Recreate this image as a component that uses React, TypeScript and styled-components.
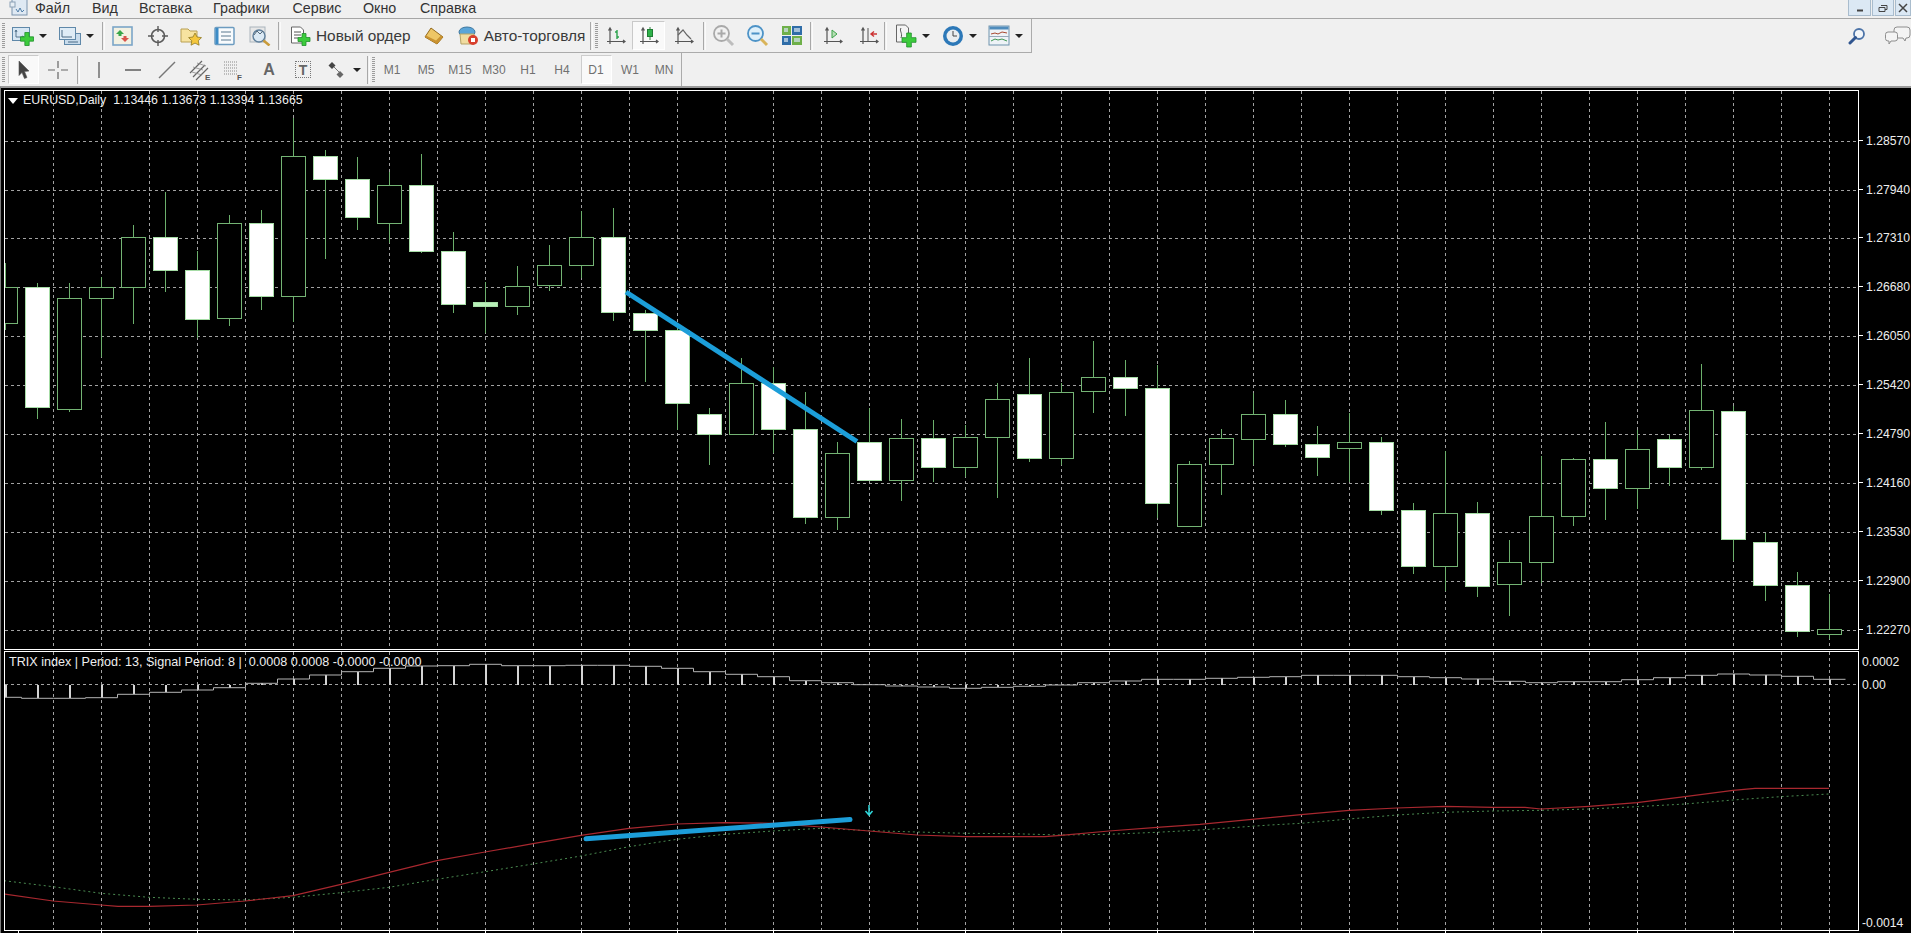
import { FunctionComponent, ReactNode } from 'react';
import styled, { createGlobalStyle } from 'styled-components';

const GlobalStyle = createGlobalStyle`
    html, body {
        margin: 0;
        padding: 0;
        background: #f0f0f0;
        overflow: hidden;
    }
`;

const Page = styled.div`
    width: 1911px;
    height: 933px;
    display: flex;
    flex-direction: column;
    overflow: hidden;
    font-family: 'Liberation Sans', Arial, sans-serif;
    background: #f0f0f0;
`;

const MenuBar = styled.div`
    height: 19px;
    box-sizing: border-box;
    display: flex;
    align-items: flex-start;
    overflow: hidden;
    border-bottom: 1px solid #a6a6a6;
`;

const AppIconSlot = styled.div`
    width: 35px;
    height: 18px;
    padding-left: 9px;
    box-sizing: border-box;
`;

const MenuItem = styled.span<{ $w: number }>`
    width: ${(p) => p.$w}px;
    font-size: 14.3px;
    line-height: 16px;
    color: #333;
    white-space: nowrap;
`;

const WindowButtons = styled.div`
    margin-left: auto;
    display: flex;
    gap: 1px;
`;

const WindowButton = styled.div<{ $w: number }>`
    width: ${(p) => p.$w}px;
    height: 16px;
    box-sizing: border-box;
    display: flex;
    align-items: center;
    justify-content: center;
    background: #dbe8f4;
    border: 1px solid #a9bccd;
    border-top: 0;
`;

const ToolRow = styled.div<{ $h: number }>`
    height: ${(p) => p.$h}px;
    display: flex;
    align-items: stretch;
`;

const ToolGroup = styled.div<{ $line?: boolean }>`
    display: flex;
    align-items: center;
    box-sizing: border-box;
    border-right: 1px solid #ababab;
    ${(p) => (p.$line ? 'border-bottom: 1px solid #ababab;' : '')}
`;

const Gripper = styled.div<{ $w?: number }>`
    width: 3px;
    height: 26px;
    margin: 0 ${(p) => p.$w ?? 3}px 0 2px;
    background: repeating-linear-gradient(180deg, #9c9c9c 0 1px, transparent 1px 2px);
`;

const Separator = styled.div`
    width: 3px;
    height: 28px;
    box-sizing: border-box;
    border-left: 1px solid #a8a8a8;
    border-right: 1px solid #fafafa;
`;

const Tool = styled.div<{ $w: number; $active?: boolean }>`
    width: ${(p) => p.$w}px;
    height: 29px;
    box-sizing: border-box;
    display: flex;
    align-items: center;
    justify-content: center;
    gap: 5px;
    ${(p) => (p.$active ? 'background: #f9f9f9; border: 1px solid #c9c9c9; border-bottom-color: #fff; border-right-color: #fff;' : '')}
`;

const TextTool = styled.div`
    height: 29px;
    display: flex;
    align-items: center;
    gap: 5px;
    padding: 0 6px 0 9px;
    font-size: 15.4px;
    color: #3a3a3a;
    white-space: nowrap;
`;

const AutoTool = styled(TextTool)`
    padding: 0 5px 0 6px;
`;

const Caret = styled.span`
    width: 0;
    height: 0;
    border-left: 4px solid transparent;
    border-right: 4px solid transparent;
    border-top: 4px solid #222;
`;

const RightTools = styled.div`
    margin-left: auto;
    display: flex;
    align-items: center;
    gap: 19px;
`;

const Period = styled.div<{ $active?: boolean }>`
    width: 31px;
    height: 29px;
    margin: 0 1.5px;
    box-sizing: border-box;
    display: flex;
    align-items: center;
    justify-content: center;
    font-size: 12px;
    color: #707070;
    ${(p) => (p.$active ? 'background: #f9f9f9; border: 1px solid #cdcdcd; border-bottom-color: #fff; border-right-color: #fff;' : '')}
`;

const LetterTool = styled.span`
    font-size: 16px;
    font-weight: 700;
    color: #666;
`;

const BoxedLetter = styled.span`
    width: 16px;
    height: 17px;
    box-sizing: border-box;
    display: flex;
    align-items: center;
    justify-content: center;
    border: 1px dotted #777;
    font-size: 14px;
    font-weight: 700;
    color: #666;
`;

const Workspace = styled.div`
    flex: 1;
    box-sizing: border-box;
    background: #000;
    border-top: 2px solid #9a9a9a;
    border-left: 1px solid #7d7d7d;
    padding: 2px 0 0 3px;
`;

const Pane = styled.div<{ $h: number; $gap?: number }>`
    height: ${(p) => p.$h}px;
    margin-top: ${(p) => p.$gap ?? 0}px;
    display: flex;
`;

const Plot = styled.div`
    position: relative;
    width: 1855px;
    box-sizing: border-box;
    border: 1px solid #fff;
`;

const PlotSvg = styled.svg`
    display: block;
`;

const ChartCaption = styled.div`
    position: absolute;
    top: 2px;
    left: 3px;
    display: flex;
    align-items: center;
    gap: 5px;
    font-size: 12.4px;
    line-height: 15px;
    color: #eee;
    white-space: pre;
`;

const CaptionArrow = styled.span`
    width: 0;
    height: 0;
    border-left: 5px solid transparent;
    border-right: 5px solid transparent;
    border-top: 6px solid #fff;
`;

const IndicatorCaption = styled.div`
    position: absolute;
    top: 3px;
    left: 4px;
    font-size: 12.6px;
    line-height: 15px;
    color: #eee;
    white-space: pre;
`;

const Axis = styled.div`
    position: relative;
    flex: 1;
`;

const PriceLabel = styled.span<{ $tick?: boolean }>`
    position: absolute;
    left: ${(p) => (p.$tick ? 7 : 3)}px;
    font-size: 12.2px;
    line-height: 16px;
    color: #eee;

    ${(p) =>
        p.$tick
            ? `&::before {
        content: '';
        position: absolute;
        left: -7px;
        top: 7px;
        width: 4px;
        height: 1px;
        background: #fff;
    }`
            : ''}
`;

const TimeTicks = styled.div`
    height: 2px;
    background: repeating-linear-gradient(90deg, #fff 0 1px, transparent 1px 96px);
    background-position-x: 97px;
`;

// ---------- icons ----------

const Plus = ({ x, y, s }: { x: number; y: number; s: number }) => {
    const a = s / 3;
    const b = (s * 2) / 3;
    return (
        <path
            d={`M${x - a} ${y - s}h${b}v${b}h${b}v${b}h${-b}v${b}h${-b}v${-b}h${-b}v${-b}h${b}z`}
            fill="#3ccb3c"
            stroke="#1f8f2c"
            strokeWidth=".8"
        />
    );
};

const Icon: FunctionComponent<{ w?: number; h?: number; children: ReactNode }> = ({ w = 22, h = 20, children }) => (
    <svg width={w} height={h} viewBox={`0 0 ${w} ${h}`} style={{ flex: 'none' }}>
        {children}
    </svg>
);

const Axes = ({ children }: { children?: ReactNode }) => (
    <>
        <path d="M4 2v16M1 15.500h18M2.500 4.500l1.500-2.500 1.500 2.500M17 14l2 1.500-2 1.500" fill="none" stroke="#555" strokeWidth="1.200" />
        {children}
    </>
);

const NewChartIcon = () => (
    <Icon>
        <rect x=".5" y="1.500" width="17" height="13" fill="#d7e7f4" stroke="#5f88a9" />
        <path d="M4 4v7h8M3 6l1-2 1 2M10 10l2 1-2 1" fill="none" stroke="#4a6a85" strokeWidth=".9" />
        <Plus x={15} y={13} s={6.500} />
    </Icon>
);

const ProfilesIcon = () => (
    <Icon>
        <rect x="5.500" y="7.500" width="16" height="11" fill="#c9dcec" stroke="#5f88a9" />
        <rect x=".5" y="1.500" width="16" height="12" fill="#dfecf6" stroke="#5f88a9" />
        <path d="M3 4v7h10M9 16h10" fill="none" stroke="#4a6a85" />
    </Icon>
);

const WatchIcon = () => (
    <Icon>
        <rect x="1" y="1" width="19" height="18" fill="#f3f1e2" stroke="#7ba6c8" strokeWidth="1.600" />
        <path d="M8 4l4 4H9.500v2h-3V8H4z" fill="#39a648" />
        <path d="M13 16l-4-4h2.500v-2h3v2H17z" fill="#d9534a" />
    </Icon>
);

const NavigatorIcon = () => (
    <Icon>
        <circle cx="11" cy="10" r="6.500" fill="none" stroke="#5b5b5b" strokeWidth="1.600" />
        <path d="M11 0v6M11 14v6M1 10h6M15 10h6" stroke="#5b5b5b" strokeWidth="1.400" />
    </Icon>
);

const FolderStarIcon = () => (
    <Icon>
        <path d="M1 3h7l2 2h7v11H1z" fill="#f7e3a0" stroke="#b9a052" />
        <path d="M15 7l2 4 4.500.6-3.200 3.200.8 4.400-4.100-2.100-4 2.100.8-4.400-3.200-3.200 4.400-.6z" fill="#f5c73d" stroke="#8f7a24" strokeWidth=".8" />
    </Icon>
);

const ListIcon = () => (
    <Icon>
        <rect x="1" y="1.500" width="19" height="17" rx="1" fill="#f8fbfd" stroke="#6d9cc0" strokeWidth="1.500" />
        <rect x="1.500" y="2" width="3" height="16" fill="#3d8cc6" />
        <path d="M7 6h10M7 10h10M7 14h10" stroke="#58788f" />
    </Icon>
);

const TesterIcon = () => (
    <Icon w={24}>
        <rect x="1" y="1" width="15" height="15" fill="#e7e7e7" stroke="#a9b4bc" />
        <circle cx="10" cy="10" r="6" fill="#dbe9f4" stroke="#5f7f9b" strokeWidth="1.400" />
        <path d="M5 9l3-4 3 3 3-3" fill="none" stroke="#55697a" />
        <path d="M14.500 14.500l6 5" stroke="#c99b3a" strokeWidth="2.500" />
    </Icon>
);

const OrderIcon = () => (
    <Icon w={21}>
        <path d="M1.500 1h9l3 3v13h-12z" fill="#fff" stroke="#666" />
        <path d="M4 6h7M4 9h7M4 12h4" stroke="#555" />
        <Plus x={14} y={13.500} s={6} />
    </Icon>
);

const EraserIcon = () => (
    <Icon>
        <path d="M8 2l12 9-6 7-12-7z" fill="#eec665" stroke="#92691d" />
        <path d="M2 11l12 7 6-7-2-1.500-5 5-10-5z" fill="#c99230" />
    </Icon>
);

const AutoTradeIcon = () => (
    <Icon w={21}>
        <ellipse cx="9" cy="6" rx="8" ry="5" fill="#5ba5d8" stroke="#40789f" />
        <path d="M2 8h14v10H3z" fill="#f1dca0" stroke="#b5a366" />
        <circle cx="15" cy="14" r="5" fill="#d8402e" />
        <rect x="13" y="12" width="4" height="4" fill="#fff" />
    </Icon>
);

const BarChartIcon = () => (
    <Icon w={20}>
        <Axes />
        <path d="M11 4v9M11 6h-2M11 11h2" fill="none" stroke="#2ba24c" strokeWidth="1.400" />
    </Icon>
);

const CandleChartIcon = () => (
    <Icon w={20}>
        <Axes />
        <path d="M11 1v13" stroke="#2d7f3c" />
        <rect x="8.500" y="3.500" width="5" height="7" fill="#2fb24a" stroke="#1f7d33" />
    </Icon>
);

const LineChartIcon = () => (
    <Icon w={20}>
        <Axes />
        <path d="M4 9l5-5 4 5 4 4" fill="none" stroke="#666" strokeWidth="1.200" />
    </Icon>
);

const Magnifier = ({ tone, lens, sign, handle }: { tone: string; lens: string; sign: string; handle: string }) => (
    <Icon w={23} h={23}>
        <circle cx="9.500" cy="9.500" r="7.500" fill={lens} stroke={tone} strokeWidth="1.800" />
        <path d={sign} stroke={tone} strokeWidth="2" />
        <path d="M15 15l6 6" stroke={handle} strokeWidth="3" />
    </Icon>
);

const TileIcon = () => (
    <Icon h={21}>
        <rect x="1" y="1" width="9" height="9" fill="#6fb04a" />
        <rect x="11" y="1" width="10" height="9" fill="#2f6da8" />
        <rect x="1" y="11" width="9" height="9" fill="#2f6da8" />
        <rect x="11" y="11" width="10" height="9" fill="#6fb04a" />
        <path d="M3 3h4v4H3zM13 3h6v4h-6zM3 13h4v4H3zM13 13h6v4h-6z" fill="#d4e4ef" opacity=".7" />
    </Icon>
);

const AutoScrollIcon = () => (
    <Icon w={20}>
        <Axes />
        <path d="M9 4l5 4-5 4z" fill="#b7dfb5" stroke="#3da24a" />
    </Icon>
);

const ShiftIcon = () => (
    <Icon w={20}>
        <Axes />
        <path d="M9 2v13" stroke="#555" />
        <path d="M18 8h-5M15 5.500l-3 2.500 3 2.500" fill="none" stroke="#c33" strokeWidth="1.400" />
    </Icon>
);

const IndicatorsIcon = () => (
    <Icon h={24}>
        <path d="M1.500 1h9l3 3v14h-12z" fill="#f4f4f4" stroke="#666" />
        <path d="M6 4c-2 3 2 5 0 10" fill="none" stroke="#555" />
        <Plus x={14} y={16} s={7} />
    </Icon>
);

const ClockIcon = () => (
    <Icon h={22}>
        <circle cx="11" cy="11" r="10" fill="#2c78b8" />
        <circle cx="11" cy="11" r="6.500" fill="#e9edf0" />
        <path d="M11 6v5h4" fill="none" stroke="#444" />
    </Icon>
);

const TemplateIcon = () => (
    <Icon h={21}>
        <rect x="1" y="1" width="20" height="19" fill="#eef3f7" stroke="#6f93ad" />
        <rect x="1.500" y="1.500" width="19" height="3" fill="#4f8cbc" />
        <path d="M3 9l4-1 3 1 4-2 5 1" fill="none" stroke="#a8492f" />
        <path d="M3 16l4-2 3 1 4-1 5 2" fill="none" stroke="#3d9651" />
        <path d="M1 11.500h20" stroke="#9ab" />
    </Icon>
);

const SearchIcon = () => (
    <Icon w={18} h={18}>
        <circle cx="11" cy="7" r="5" fill="#f3f6f9" stroke="#4d74a8" strokeWidth="1.800" />
        <path d="M7.500 10.500L2 16" stroke="#30558f" strokeWidth="3" strokeLinecap="round" />
    </Icon>
);

const ChatIcon = () => (
    <Icon w={26} h={20}>
        <path d="M12 1h10a3 3 0 013 3v5a3 3 0 01-3 3h-1l-1 3-2-3h-6a3 3 0 01-3-3V4a3 3 0 013-3z" fill="#f4f4f4" stroke="#8e8e8e" />
        <path d="M3 6h7a2.500 2.500 0 012.500 2.500v4A2.500 2.500 0 0110 15H6l-2 3v-3H3a2.500 2.500 0 01-2.500-2.500v-4A2.500 2.500 0 013 6z" fill="#f4f4f4" stroke="#8e8e8e" />
    </Icon>
);

const CursorIcon = () => (
    <Icon w={16}>
        <path d="M3 1l10 10-4.500.5 2.500 6-2.500 1-2.500-6L3 15.500z" fill="#444" stroke="#555" strokeWidth=".6" />
    </Icon>
);

const CrossIcon = () => (
    <Icon>
        <path d="M11 1v7M11 12v7M1 10h7M14 10h7" stroke="#666" strokeWidth="1.200" />
    </Icon>
);

const VLineIcon = () => (
    <Icon w={6}>
        <path d="M3 2v16" stroke="#777" strokeWidth="1.600" />
    </Icon>
);

const HLineIcon = () => (
    <Icon w={18}>
        <path d="M1 10h16" stroke="#666" strokeWidth="1.600" />
    </Icon>
);

const TrendIcon = () => (
    <Icon w={18}>
        <path d="M1 18L17 2" stroke="#777" strokeWidth="1.400" />
    </Icon>
);

const ChannelIcon = () => (
    <Icon w={24} h={22}>
        <path d="M1 14L13 2M4 18L16 6M7 21L19 9" stroke="#666" strokeWidth="1.200" />
        <path d="M4 8l10 3M8 4l9 3M3 13l10 3" stroke="#888" strokeWidth=".8" />
        <text x="16" y="21" fontFamily="Liberation Sans" fontSize="8" fontWeight="700" fill="#555">E</text>
    </Icon>
);

const FiboIcon = () => (
    <Icon w={22} h={22}>
        <path d="M1 3h14M1 6h14M1 9h14M1 12h14M1 15h14" stroke="#888" strokeDasharray="1 1" />
        <text x="14" y="21" fontFamily="Liberation Sans" fontSize="8" fontWeight="700" fill="#555">F</text>
    </Icon>
);

const ShapesIcon = () => (
    <Icon>
        <path d="M6 2l3.500 3.500L6 9 2.500 5.500z" fill="#444" />
        <path d="M14 11l3.500 3.500L14 18l-3.500-3.500z" fill="#666" />
        <path d="M8 7l5 5" stroke="#777" />
    </Icon>
);

// ---------- chart data ----------

const BLUE = '#1c9ed9';
const GRID = '#a2a2a2';
const candleX = (k: number) => 37.5 + 32 * k;
const gridXs = Array.from({ length: 38 }, (_, i) => 53 + 48 * i);

// high, body top, body bottom, low, filled
const candles: [number, number, number, number, number][] = [
    [263, 287, 323, 330, 0], [283, 287, 407, 419, 1], [283, 298, 409, 412, 0], [277, 287, 298, 357, 0],
    [225, 237, 287, 324, 0], [192, 237, 270, 292, 1], [251, 270, 319, 338, 1], [215, 223, 318, 326, 0],
    [210, 223, 296, 310, 1], [118, 156, 296, 322, 0], [150, 156, 179, 259, 1], [157, 179, 217, 230, 1],
    [172, 185, 223, 243, 0], [154, 185, 251, 253, 1], [232, 251, 304, 313, 1], [282, 302, 306, 333, 1],
    [266, 286, 306, 315, 0], [245, 265, 285, 291, 0], [211, 237, 265, 278, 0], [208, 237, 312, 321, 1],
    [310, 313, 330, 382, 1], [328, 330, 403, 430, 1], [408, 414, 434, 465, 1], [358, 383, 434, 434, 0],
    [367, 383, 429, 453, 1], [392, 429, 517, 524, 1], [442, 453, 517, 530, 0], [408, 442, 480, 480, 1],
    [419, 438, 480, 501, 0], [420, 438, 467, 482, 1], [425, 437, 467, 477, 0], [383, 399, 437, 498, 0],
    [358, 394, 458, 462, 1], [383, 392, 458, 465, 0], [341, 377, 391, 413, 0], [360, 377, 388, 416, 1],
    [365, 388, 503, 518, 1], [461, 464, 526, 526, 0], [429, 438, 464, 495, 0], [393, 414, 439, 465, 0],
    [400, 414, 444, 447, 1], [426, 444, 457, 476, 1], [413, 442, 448, 482, 0], [437, 442, 510, 515, 1],
    [503, 510, 566, 574, 1], [451, 513, 566, 591, 0], [502, 513, 586, 597, 1], [540, 562, 584, 616, 0],
    [456, 516, 562, 583, 0], [458, 459, 516, 526, 0], [422, 459, 488, 520, 1], [430, 449, 488, 509, 0],
    [435, 439, 467, 486, 1], [364, 410, 467, 470, 0], [406, 411, 539, 561, 1], [533, 542, 585, 601, 1],
    [572, 585, 631, 637, 1], [594, 629, 634, 639, 0],
];

const priceLevels = ['1.28570', '1.27940', '1.27310', '1.26680', '1.26050', '1.25420', '1.24790', '1.24160', '1.23530', '1.22900', '1.22270'];
const priceY = (i: number) => 140.5 + 49 * i - (i > 1 ? 0.1 : 0);

const ZERO_Y = 684.5;
const histogram = [
    697.3, 698.3, 698.3, 697.7, 694.3, 692.3, 690, 687.7, 683.3, 679, 675, 671.7, 668.3, 666, 665.7, 664.3, 665.7, 665.7,
    665.3, 665.3, 666.3, 668.3, 671.7, 674.3, 676.7, 680.7, 682.7, 684.7, 686, 687, 688.3, 687.3, 686.3, 685, 682.7, 681,
    679.3, 679.3, 678.3, 677.3, 676.7, 675.3, 675.3, 675.3, 676.7, 677.7, 679, 681.3, 682.7, 681.7, 681.7, 679.7, 677.7,
    675.3, 674, 675, 676.3, 679.3,
];

const trixLine = '4,894 53,901 101,905 118,906.3 149,906.3 197,905 245,901 293,895.7 341,884.3 389,872.3 437,860.7 485,852 533,843.7 581,835.3 629,828.3 677,824 725,822.7 773,823.3 821,827 869,831 917,835 965,836.7 1013,836.7 1045,836.7 1061,835.3 1109,831 1157,827.3 1200,824.3 1270,817.7 1301,814.7 1349,810.3 1397,808 1445,806.3 1493,807.3 1525,807.3 1541,809 1589,806.3 1637,802.7 1685,796.7 1733,790.3 1755,788.3 1829,788.3';
const signalLine = '4,880.7 53,886.7 101,893.3 149,897.3 197,899.3 245,900 293,897.3 341,892.7 389,887.3 437,879.3 485,871.7 533,864 581,856 629,846.7 677,839.3 725,834.3 773,831 821,828.3 869,830.7 917,832 965,833.3 1013,833.7 1061,835 1109,834.3 1157,832.3 1200,830 1270,825 1301,823.3 1349,819 1397,815 1445,812.3 1493,811 1541,810.3 1589,809 1637,806.7 1685,804 1733,800 1780,796.7 1829,794';

const histogramPath = histogram
    .map((y, i) => {
        const x = candleX(i - 1);
        return `${i === 0 ? `M${x - 16} ${y}` : `L${x - 16} ${y}`}H${x + 16}`;
    })
    .join('');

const GridLines = ({ top, bottom }: { top: number; bottom: number }) => (
    <g stroke={GRID} strokeDasharray="3 3" shapeRendering="crispEdges">
        {gridXs.map((x) => (
            <line key={x} x1={x + 0.5} x2={x + 0.5} y1={top} y2={bottom} />
        ))}
    </g>
);

const PriceChart = () => (
    <PlotSvg width={1853} height={558} viewBox="5 91 1853 558">
        <GridLines top={91} bottom={649} />
        <g stroke={GRID} strokeDasharray="3 3" shapeRendering="crispEdges">
            {priceLevels.map((p, i) => (
                <line key={p} x1={5} x2={1858} y1={Math.round(priceY(i)) + 0.5} y2={Math.round(priceY(i)) + 0.5} />
            ))}
        </g>
        <g shapeRendering="crispEdges">
            {candles.map(([high, top, bottom, low, filled], i) => {
                const x = Math.floor(candleX(i - 1)) + 0.5;
                return (
                    <g key={i}>
                        <line x1={x} x2={x} y1={high} y2={low} stroke="#6cb06c" />
                        <rect
                            x={x - 12}
                            y={top + 0.5}
                            width={24}
                            height={bottom - top}
                            fill={filled ? (bottom - top < 6 ? '#b8f0b8' : '#fff') : '#000'}
                            stroke={filled ? '#a6dca6' : '#74b474'}
                        />
                    </g>
                );
            })}
        </g>
        <line x1={626} y1={292} x2={857} y2={441.5} stroke={BLUE} strokeWidth={5} />
    </PlotSvg>
);

const TrixChart = () => (
    <PlotSvg width={1853} height={278} viewBox="5 652 1853 278">
        <GridLines top={652} bottom={930} />
        <line x1={5} x2={1858} y1={ZERO_Y} y2={ZERO_Y} stroke={GRID} strokeDasharray="3 3" shapeRendering="crispEdges" />
        <g stroke="#d4d4d4" strokeWidth={2} shapeRendering="crispEdges">
            {histogram.map((y, i) => (
                <line key={i} x1={candleX(i - 1)} x2={candleX(i - 1)} y1={ZERO_Y} y2={y} />
            ))}
        </g>
        <path d={histogramPath} fill="none" stroke="#b4b4b4" />
        <polyline points={signalLine} fill="none" stroke="#4a8a50" strokeDasharray="2 3" />
        <polyline points={trixLine} fill="none" stroke="#a8282f" strokeWidth={1.200} />
        <line x1={586} y1={838.7} x2={850} y2={819.5} stroke={BLUE} strokeWidth={5} strokeLinecap="round" />
        <path d="M869 805v10M865.500 811l3.500 4 3.500-4" fill="none" stroke="#2fd8dc" strokeWidth={1.500} />
    </PlotSvg>
);

const periods = ['M1', 'M5', 'M15', 'M30', 'H1', 'H4', 'D1', 'W1', 'MN'];

const menus: [string, number][] = [['Файл', 57], ['Вид', 47], ['Вставка', 74], ['Графики', 79.5], ['Сервис', 70.5], ['Окно', 57], ['Справка', 70]];

const App: FunctionComponent = () => (
    <Page>
        <GlobalStyle />
        <MenuBar>
            <AppIconSlot>
                <svg width="20" height="17" viewBox="0 0 20 17">
                    <rect x="3" y="-6" width="15" height="21" fill="#dfe9f3" stroke="#7b93ad" />
                    <rect x="1" y="2" width="5" height="5" fill="#e6eef5" stroke="#8aa0b5" />
                    <path d="M7 9l2 3 2-4 2 4 2-2" fill="none" stroke="#4f7ea8" />
                </svg>
            </AppIconSlot>
            {menus.map(([label, w]) => (
                <MenuItem key={label} $w={w}>{label}</MenuItem>
            ))}
            <WindowButtons>
                <WindowButton $w={23}>
                    <svg width="8" height="8" viewBox="0 0 8 8"><path d="M1 6.500h6" stroke="#444" strokeWidth="2" /></svg>
                </WindowButton>
                <WindowButton $w={22}>
                    <svg width="10" height="10" viewBox="0 0 10 10"><path d="M3 2.500h6v4H7M1 4.500h6v4H1z" fill="none" stroke="#444" /></svg>
                </WindowButton>
                <WindowButton $w={16}>
                    <svg width="10" height="10" viewBox="0 0 10 10"><path d="M1 1l8 8M9 1L1 9" stroke="#444" strokeWidth="1.500" /></svg>
                </WindowButton>
            </WindowButtons>
        </MenuBar>

        <ToolRow $h={34}>
            <ToolGroup $line>
                <Gripper />
                <Tool $w={42}><NewChartIcon /><Caret /></Tool>
                <Tool $w={52}><ProfilesIcon /><Caret /></Tool>
                <Separator />
                <Tool $w={36}><WatchIcon /></Tool>
                <Tool $w={34}><NavigatorIcon /></Tool>
                <Tool $w={32}><FolderStarIcon /></Tool>
                <Tool $w={36}><ListIcon /></Tool>
                <Tool $w={35}><TesterIcon /></Tool>
                <Separator />
                <TextTool><OrderIcon />Новый ордер</TextTool>
                <Tool $w={35}><EraserIcon /></Tool>
                <AutoTool><AutoTradeIcon />Авто-торговля</AutoTool>
                <Separator />
                <Gripper $w={2} />
                <Tool $w={32}><BarChartIcon /></Tool>
                <Tool $w={33} $active><CandleChartIcon /></Tool>
                <Tool $w={38}><LineChartIcon /></Tool>
                <Separator />
                <Tool $w={34}>
                    <Magnifier tone="#a9a9a9" lens="#f1f1f1" sign="M5.500 9.500h8M9.500 5.500v8" handle="#bdbdbd" />
                </Tool>
                <Tool $w={34}>
                    <Magnifier tone="#4d93c7" lens="#dff0fa" sign="M5.500 9.500h8" handle="#d9b45a" />
                </Tool>
                <Tool $w={36}><TileIcon /></Tool>
                <Separator />
                <Tool $w={40}><AutoScrollIcon /></Tool>
                <Tool $w={31}><ShiftIcon /></Tool>
                <Separator />
                <Tool $w={51}><IndicatorsIcon /><Caret /></Tool>
                <Tool $w={42}><ClockIcon /><Caret /></Tool>
                <Tool $w={51}><TemplateIcon /><Caret /></Tool>
            </ToolGroup>
            <RightTools>
                <SearchIcon />
                <ChatIcon />
            </RightTools>
        </ToolRow>

        <ToolRow $h={33}>
            <ToolGroup>
                <Gripper />
                <Tool $w={31} $active><CursorIcon /></Tool>
                <Tool $w={38}><CrossIcon /></Tool>
                <Separator />
                <Tool $w={38}><VLineIcon /></Tool>
                <Tool $w={30}><HLineIcon /></Tool>
                <Tool $w={38}><TrendIcon /></Tool>
                <Tool $w={30}><ChannelIcon /></Tool>
                <Tool $w={36}><FiboIcon /></Tool>
                <Tool $w={34}><LetterTool>A</LetterTool></Tool>
                <Tool $w={34}><BoxedLetter>T</BoxedLetter></Tool>
                <Tool $w={47}><ShapesIcon /><Caret /></Tool>
                <Separator />
                <Gripper $w={0} />
                {periods.map((p) => (
                    <Period key={p} $active={p === 'D1'}>{p}</Period>
                ))}
            </ToolGroup>
        </ToolRow>

        <Workspace>
            <Pane $h={560}>
                <Plot>
                    <PriceChart />
                    <ChartCaption>
                        <CaptionArrow />
                        <span>EURUSD,Daily  1.13446 1.13673 1.13394 1.13665</span>
                    </ChartCaption>
                </Plot>
                <Axis>
                    {priceLevels.map((p, i) => (
                        <PriceLabel key={p} $tick style={{ top: priceY(i) - 98 }}>{p}</PriceLabel>
                    ))}
                </Axis>
            </Pane>
            <Pane $h={280} $gap={1}>
                <Plot>
                    <TrixChart />
                    <IndicatorCaption>TRIX index | Period: 13, Signal Period: 8 |  0.0008 0.0008 -0.0000 -0.0000</IndicatorCaption>
                </Plot>
                <Axis>
                    {[['0.0002', 3], ['0.00', 26], ['-0.0014', 264]].map(([label, top]) => (
                        <PriceLabel key={label} style={{ top }}>{label}</PriceLabel>
                    ))}
                </Axis>
            </Pane>
            <TimeTicks />
        </Workspace>
    </Page>
);

export default App;
